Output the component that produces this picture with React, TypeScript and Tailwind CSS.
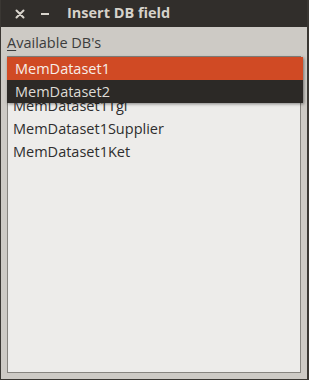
import React from "react";

export default function App() {
  const font = { fontFamily: '"Open Sans", "Noto Sans", "DejaVu Sans", sans-serif' };
  const items = ["MemDataset1Tgl", "MemDataset1Supplier", "MemDataset1Ket"];
  return (
    <div className="w-[309px] h-[380px] bg-[#3a3733] flex flex-col pl-px pr-[2px] pb-px" style={font}>
      <div className="h-[27px] flex items-center shrink-0 bg-[#312e2b]">
        <svg width="10" height="10" viewBox="0 0 10 10" className="ml-[14px]">
          <path d="M1.5 1.5 L8.5 8.5 M8.5 1.5 L1.5 8.5" stroke="#d8d4cc" strokeWidth="2" strokeLinecap="round" />
        </svg>
        <div className="ml-[16px] w-[8px] h-[2px] bg-[#d8d4cc]" />
        <div className="ml-[18px] text-[14.5px] font-bold text-[#d6d2ca] leading-none">Insert DB field</div>
      </div>
      <div className="flex-1 bg-[#cdcac5] flex flex-col px-[6px] pb-[6px]">
        <div className="h-[29px] flex items-center text-[14.5px] text-[#3c3c3c] pt-[3px]">
          <span><span className="underline underline-offset-2">A</span>vailable DB's</span>
        </div>
        <div className="relative flex-1 bg-[#edecea] border border-[#86847f]">
          <div className="h-full overflow-hidden">
            <div className="flex flex-col pt-[37px]">
              {items.map((t) => (
                <div key={t} className="h-[23px] flex items-center pl-[5px] text-[14.5px] text-[#2e2e2e]">
                  {t}
                </div>
              ))}
            </div>
          </div>
          <div className="absolute left-[-1px] top-0 w-[296px] shadow-[1px_1px_3px_rgba(0,0,0,0.45)]">
            <div className="h-[23px] flex items-center pl-[8px] bg-[#d04a24] text-[14.5px] text-[#f7eee9]">MemDataset1</div>
            <div className="h-[23px] flex items-center pl-[8px] bg-[#2c2926] text-[14.5px] text-[#dedbd5]">MemDataset2</div>
          </div>
        </div>
      </div>
    </div>
  );
}
